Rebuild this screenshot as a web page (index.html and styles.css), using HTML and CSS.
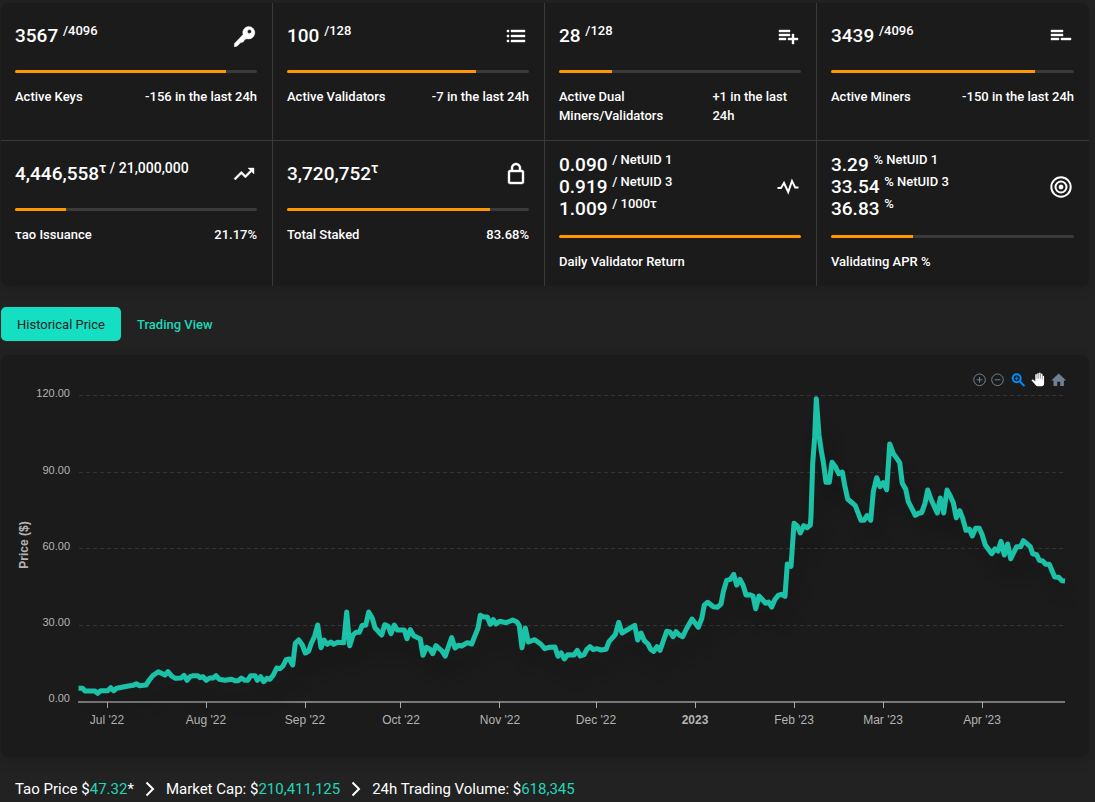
FILE: index.html
```
<!DOCTYPE html>
<html lang="en">
<head>
  <meta charset="UTF-8">
  <meta name="viewport" content="width=device-width, initial-scale=1.0">
  <title>Tao Stats</title>
  <link rel="stylesheet" href="styles.css">
</head>
<body>

<section class="stats panel">
  <div class="stat">
    <div class="stat-head">
      <div class="value">3567 <sup>/4096</sup></div>
      <svg class="icon" viewBox="0 0 24 24"><path fill-rule="evenodd" d="M16.5 2.4a6.3 6.3 0 1 1-1.5 12.4l-2.2.7-1.6 2.5-2.7.8L5 22.3l-2.8.4.3-3.3L11 10.6a6.3 6.3 0 0 1 5.5-8.2zM17.4 5.6a2 2 0 1 0 .1 4 2 2 0 0 0-.1-4z"/></svg>
    </div>
    <div class="bar"><div class="fill" style="width: 87.1%"></div></div>
    <div class="stat-foot"><span>Active Keys</span><span>-156 in the last 24h</span></div>
  </div>
  <div class="stat">
    <div class="stat-head">
      <div class="value">100 <sup>/128</sup></div>
      <svg class="icon" viewBox="0 0 24 24"><path d="M3 13h2v-2H3v2zm0 5h2v-2H3v2zM3 8h2V6H3v2zm4 5h14v-2H7v2zm0 5h14v-2H7v2zM7 6v2h14V6H7z"/></svg>
    </div>
    <div class="bar"><div class="fill" style="width: 78.1%"></div></div>
    <div class="stat-foot"><span>Active Validators</span><span>-7 in the last 24h</span></div>
  </div>
  <div class="stat">
    <div class="stat-head">
      <div class="value">28 <sup>/128</sup></div>
      <svg class="icon" viewBox="0 0 24 24"><path d="M14 10H3v2h11v-2zm0-4H3v2h11V6zm4 8v-4h-2v4h-4v2h4v4h2v-4h4v-2h-4zM3 16h7v-2H3v2z"/></svg>
    </div>
    <div class="bar"><div class="fill" style="width: 21.9%"></div></div>
    <div class="stat-foot"><span>Active Dual Miners/Validators</span><span>+1 in the last 24h</span></div>
  </div>
  <div class="stat">
    <div class="stat-head">
      <div class="value">3439 <sup>/4096</sup></div>
      <svg class="icon" viewBox="0 0 24 24"><path d="M14 10H2v2h12v-2zm0-4H2v2h12V6zM2 16h8v-2H2v2zm10-2v2h10v-2H12z"/></svg>
    </div>
    <div class="bar"><div class="fill" style="width: 84%"></div></div>
    <div class="stat-foot"><span>Active Miners</span><span>-150 in the last 24h</span></div>
  </div>

  <div class="stat">
    <div class="stat-head">
      <div class="value">4,446,558<sup class="large">τ / 21,000,000</sup></div>
      <svg class="icon" viewBox="0 0 24 24"><path d="M16 6l2.29 2.29-4.88 4.88-4-4L2 16.59 3.41 18l6-6 4 4 6.3-6.29L22 12V6z"/></svg>
    </div>
    <div class="bar"><div class="fill" style="width: 21.17%"></div></div>
    <div class="stat-foot"><span>τao Issuance</span><span>21.17%</span></div>
  </div>
  <div class="stat">
    <div class="stat-head">
      <div class="value">3,720,752<sup class="large">τ</sup></div>
      <svg class="icon" viewBox="0 0 24 24"><path d="M18 8h-1V6c0-2.76-2.24-5-5-5S7 3.24 7 6v2H6c-1.1 0-2 .9-2 2v10c0 1.1.9 2 2 2h12c1.1 0 2-.9 2-2V10c0-1.1-.9-2-2-2zM9 6c0-1.66 1.34-3 3-3s3 1.34 3 3v2H9V6zm9 14H6V10h12v10z"/></svg>
    </div>
    <div class="bar"><div class="fill" style="width: 83.68%"></div></div>
    <div class="stat-foot"><span>Total Staked</span><span>83.68%</span></div>
  </div>
  <div class="stat">
    <div class="stat-head">
      <div class="value">0.090 <sup>/ NetUID 1</sup><br>0.919 <sup>/ NetUID 3</sup><br>1.009 <sup>/ 1000τ</sup></div>
      <svg class="icon" viewBox="0 0 24 24"><path class="stroke" d="M1.5 13H5l3-5 4.2 9L16 6l3.2 6.5h3.3"/></svg>
    </div>
    <div class="bar"><div class="fill" style="width: 100%"></div></div>
    <div class="stat-foot"><span>Daily Validator Return</span></div>
  </div>
  <div class="stat">
    <div class="stat-head">
      <div class="value">3.29 <sup>% NetUID 1</sup><br>33.54 <sup>% NetUID 3</sup><br>36.83 <sup>%</sup></div>
      <svg class="icon" viewBox="0 0 24 24"><circle class="stroke" cx="12" cy="12" r="9.7"/><circle class="stroke" cx="12" cy="12" r="5.5"/><circle cx="12" cy="12" r="2.2"/></svg>
    </div>
    <div class="bar"><div class="fill" style="width: 33.8%"></div></div>
    <div class="stat-foot"><span>Validating APR %</span></div>
  </div>
</section>

<div class="tabs">
  <button class="tab active">Historical Price</button>
  <button class="tab">Trading View</button>
</div>

<section class="chart panel">
  <svg viewBox="1 355 1088 402">
    <defs>
      <filter id="shadow" x="-10%" y="-10%" width="120%" height="130%">
        <feDropShadow dx="7" dy="18" stdDeviation="10" flood-color="#000" flood-opacity="0.3"/>
      </filter>
    </defs>

    <g class="grid">
      <path d="M79 395.5H1063M79 472.5H1063M79 548.5H1063M79 625.5H1063"/>
    </g>
    <path class="axis" d="M78 702H1065"/>
    <path class="ticks" d="M107.5 702v6M206.5 702v6M305.5 702v6M400.5 702v6M499.5 702v6M596.5 702v6M695.5 702v6M794.5 702v6M883.5 702v6M982.5 702v6"/>

    <g class="y-labels">
      <text x="70" y="397">120.00</text>
      <text x="70" y="474">90.00</text>
      <text x="70" y="550">60.00</text>
      <text x="70" y="626">30.00</text>
      <text x="70" y="702">0.00</text>
    </g>
    <g class="x-labels">
      <text x="107" y="724">Jul '22</text>
      <text x="206" y="724">Aug '22</text>
      <text x="305" y="724">Sep '22</text>
      <text x="401" y="724">Oct '22</text>
      <text x="500" y="724">Nov '22</text>
      <text x="596" y="724">Dec '22</text>
      <text class="year" x="695" y="724">2023</text>
      <text x="794" y="724">Feb '23</text>
      <text x="883" y="724">Mar '23</text>
      <text x="982" y="724">Apr '23</text>
    </g>
    <text class="y-title" transform="translate(28 545) rotate(-90)">Price ($)</text>

    <polyline class="line" filter="url(#shadow)" points="
      78.5,688.3 82.5,688.3 85,691 95,691 97.7,693.3 100.7,690.7 107.7,690.7 110.7,687.7 113.7,690.7 116.7,688.3
      128.3,686 133.3,685.3 136.3,683.7 139.3,685.7 146,685 149.3,680 152.7,675.7 158.3,671.7 165,675 168,671.7
      171.3,675.7 175,678.3 181,678 184,675.3 187,680.3 190,676.7 193.3,675.7 197.7,675.7 200,677.7 203,676.7
      206.3,680.3 209.7,678 213,678 216,675.7 219.3,679.3 225,680.3 231.7,679.3 235,680.7 238.3,680.7 241.3,678
      244.7,680.3 247.7,680.3 250.7,675.7 255,675.7 257.3,680.3 260.7,676.7 263.7,681.7 267,678.3 270,679.3 273.3,675
      276.7,668 280,668.7 283,666 286,659.7 289.3,659 292.7,665 295.3,643.3 298.7,640 302.3,645 305.3,653
      308.7,651 311.3,643.3 314.7,636 317.7,625 321,647.7 324,640 327.3,644.3 330.7,642 333.7,644.3 337.7,642.3
      343.7,642.7 346.7,612 349.7,645.7 353,635 356,632.3 359.3,632.3 362.3,625.3 365.7,625.3 368.7,612 372.3,618.3
      375,627.7 381.7,635 384.7,624.7 388,626 391,633.7 394.3,625 397.3,630 404.3,630 407,638.7 410.3,629.7
      413.7,635.7 420.3,639 423,655.3 426.3,647.3 430,649.3 432.7,653.7 436,645.7 442,651 445.3,656 448.7,646
      451.7,637.7 455,648 458.3,645.3 461.7,646 467.3,642.7 471.7,644 475,635.7 478,628.3 480.3,615.3 483.7,617
      487.3,617 490.3,624.3 493.3,619.7 496,624 499.7,621.3 506,622.7 512.7,620 516.7,621.7 519.3,625.7 522,647.7
      525.3,628 528.3,642 534.7,639.7 540.7,644 544.7,648.7 549,647.3 555,647 558,656.3 561.3,653 564.3,659
      567.7,654.7 574,655 577.3,650.3 580.3,656 584,654.7 586.7,649.7 590,646.7 593.3,649.7 596.7,648.7 601,650
      606,649.3 609,641.7 615.3,634.7 618.7,622.3 622,633 634.7,625.3 637.7,640 641,633 644.3,640.7 648,644
      650.7,649.3 653.7,651.3 657,646.7 660,650.3 663.3,641 666.7,631.3 670,632 673,636.7 676,631.7 679.3,635
      682.7,636.7 686,629.7 692,619 698.3,627.3 701.7,618.7 704.3,605 707.7,602.3 713.3,606.7 717.3,607.3 721,604
      723.3,591.7 726.7,580.3 730.3,579.3 733.7,574.3 736.7,585 740,579.3 743.3,585.7 746,595 750,594.7 753,596
      755.7,608.7 759,596 765.7,603.3 768.7,602 771.7,607 775,599.3 778.3,595.3 781.3,594.3 785,596.3 787.3,564
      791,566.3 794,523.3 797.3,526 800.3,533 803.7,525.7 807,527.7 810.3,525 811,516 812.7,463.3 814.7,436.7
      816.3,398.7 819,435 821.7,453.3 823.3,461.7 826,482.3 829.3,482.3 832,462.3 835.7,467.3 838.7,473.7 842.3,472
      844.7,485.3 847.7,499 855.3,505.7 861,520.3 864,520.3 867,515.7 870.7,520.3 873.3,491.7 876.7,477.7 880,486.7
      883.3,482.7 886.7,489.7 889.7,444 893.3,453.3 899.7,462.7 902.3,483.3 905.7,489.3 908.3,501.7 912.3,509.3
      915.3,515.3 918.3,513.3 921.7,512.7 925,503.3 927.7,490 931.3,500 937.3,513 940.3,498 943.7,513 947,490
      950.3,496 953.3,502.7 956.3,517.7 959.7,510.7 962.7,518.3 966,530.3 969.3,529 972.3,536 975.7,528.3 979.3,528.3
      982,534.3 985.3,545 991.7,553.7 995,549 998,551 1001,541.3 1004.3,555 1007.7,544 1010.7,558.7 1016.7,546.7
      1020.7,546.7 1023.3,540.7 1030.3,546.7 1032.7,553.7 1036.7,554.7 1039.3,560.3 1042.7,561 1045.7,564.3
      1049.3,564.3 1054.7,577 1058.7,577.3 1062,580.7 1065,581"/>

    <!-- zoom in, zoom out, selection, pan, reset -->
    <g class="toolbar">
      <g class="outline">
        <circle cx="979.5" cy="379.8" r="5.8"/>
        <path d="M979.5 377v5.6M976.7 379.8h5.6"/>
        <circle cx="997.5" cy="379.8" r="5.8"/>
        <path d="M994.7 379.8h5.6"/>
      </g>
      <g class="selected">
        <circle cx="1016.7" cy="378.3" r="4"/>
        <path d="M1019.8 381.4l4.7 4.7"/>
        <path class="thin" d="M1016.7 376.5v3.6M1014.9 378.3h3.6"/>
      </g>
      <path class="hand" d="M1044.1 376.5v7.2c0 1.500-1 2.500-2.400 2.500h-4c-.8 0-1.400-.3-1.900-.9l-4.400-5c.9-.9 1.600-.8 2.200-.3l1.700 1.200v-6.500c0-1.100 1.500-1.100 1.500 0v4h.4v-5c0-1.100 1.500-1.100 1.500 0v5h.4v-5.400c0-1.100 1.500-1.100 1.500 0v5.400h.4v-4.300c0-1.100 1.500-1.100 1.500 0v5.300h.3v-3.200c0-1.100 1.300-1.100 1.300 0z"/>
      <path class="home" d="M1057.2 386v-4.2h3V386h3.7v-5.6h2.3l-7.5-6.9-7.5 6.9h2.3v5.6z"/>
    </g>
  </svg>
</section>

<footer class="summary">
  <span>Tao Price $<b>47.32</b>*</span>
  <svg class="chevron" viewBox="0 0 10 16"><path d="M1.5 1.5L8 8l-6.500 6.500"/></svg>
  <span>Market Cap: $<b>210,411,125</b></span>
  <svg class="chevron" viewBox="0 0 10 16"><path d="M1.5 1.5L8 8l-6.500 6.500"/></svg>
  <span>24h Trading Volume: $<b>618,345</b></span>
</footer>

</body>
</html>
```

FILE: styles.css
```
* {
  box-sizing: border-box;
}

body {
  margin: 0;
  padding: 3px 6px 0 1px;
  background: #222;
  color: #fff;
  font-family: Roboto, "Noto Sans", sans-serif;
  font-size: 13px;
}

.panel {
  background: #1b1b1b;
  border-radius: 8px;
  box-shadow: 0 4px 12px rgba(0, 0, 0, 0.15);
}

/* stats */
.stats {
  display: grid;
  grid-template-columns: repeat(4, 1fr);
  overflow: hidden;
}

.stat {
  padding: 13px 15px 15px 14px;
  border-right: 1px solid #3a3a3a;
  border-bottom: 1px solid #3a3a3a;
}

.stat:nth-child(4n) {
  border-right: none;
}

.stat:nth-child(n+5) {
  border-bottom: none;
}

.stat-head {
  display: flex;
  align-items: center;
  justify-content: space-between;
  min-height: 39px;
  margin-bottom: 15px;
}

.value {
  font-size: 19px;
  font-weight: 500;
  line-height: 22px;
}

.value sup {
  font-size: 13px;
  line-height: 0;
}

.value .large {
  font-size: 14px;
}

.icon {
  width: 24px;
  height: 24px;
  margin-right: 1px;
  fill: #fff;
  stroke: #fff;
  stroke-width: 0.4;
}

.icon .stroke {
  fill: none;
  stroke-width: 2;
}

.bar {
  height: 3px;
  background: #3a3a3a;
  border-radius: 2px;
  overflow: hidden;
}

.fill {
  height: 100%;
  background: #ff9800;
}

.stat-foot {
  display: flex;
  justify-content: space-between;
  margin-top: 14px;
  line-height: 19px;
  font-weight: 500;
}

/* tabs */
.tabs {
  display: flex;
  margin: 21px 0 14px;
}

.tab {
  height: 34px;
  padding: 0 16px;
  border: none;
  border-radius: 5px;
  background: none;
  color: #1fd6b8;
  font: 500 13px Roboto, sans-serif;
  cursor: pointer;
}

.tab.active {
  background: #14dfc3;
  color: #222;
  font-weight: 400;
}

/* chart */
.chart svg {
  display: block;
  width: 100%;
}

.grid path {
  stroke: #333;
  stroke-dasharray: 4 3;
}

.axis {
  stroke: #78787a;
  stroke-width: 2;
}

.ticks {
  stroke: #aaa;
}

.y-labels,
.x-labels,
.y-title {
  fill: #b4b4b4;
  font-family: "Liberation Sans", Arial, sans-serif;
  font-size: 12px;
}

.y-labels {
  font-size: 11px;
  text-anchor: end;
}

.x-labels,
.y-title {
  text-anchor: middle;
}

.x-labels .year,
.y-title {
  font-weight: 700;
}

.line {
  fill: none;
  stroke: #1ac2a8;
  stroke-width: 5;
  stroke-linejoin: round;
}

.toolbar .outline {
  fill: none;
  stroke: #6e8192;
}

.toolbar .selected {
  fill: none;
  stroke: #008ffb;
  stroke-width: 2;
}

.toolbar .thin {
  stroke-width: 1;
}

.toolbar .hand {
  fill: #fff;
}

.toolbar .home {
  fill: #6e8192;
}

/* summary */
.summary {
  display: flex;
  align-items: center;
  gap: 11px;
  margin-top: 22px;
  padding: 0 14px;
  font-size: 15px;
  line-height: 20px;
}

.summary b {
  color: #1fd6b8;
  font-weight: 400;
}

.chevron {
  width: 10px;
  height: 16px;
  fill: none;
  stroke: #fff;
  stroke-width: 2;
}
```
